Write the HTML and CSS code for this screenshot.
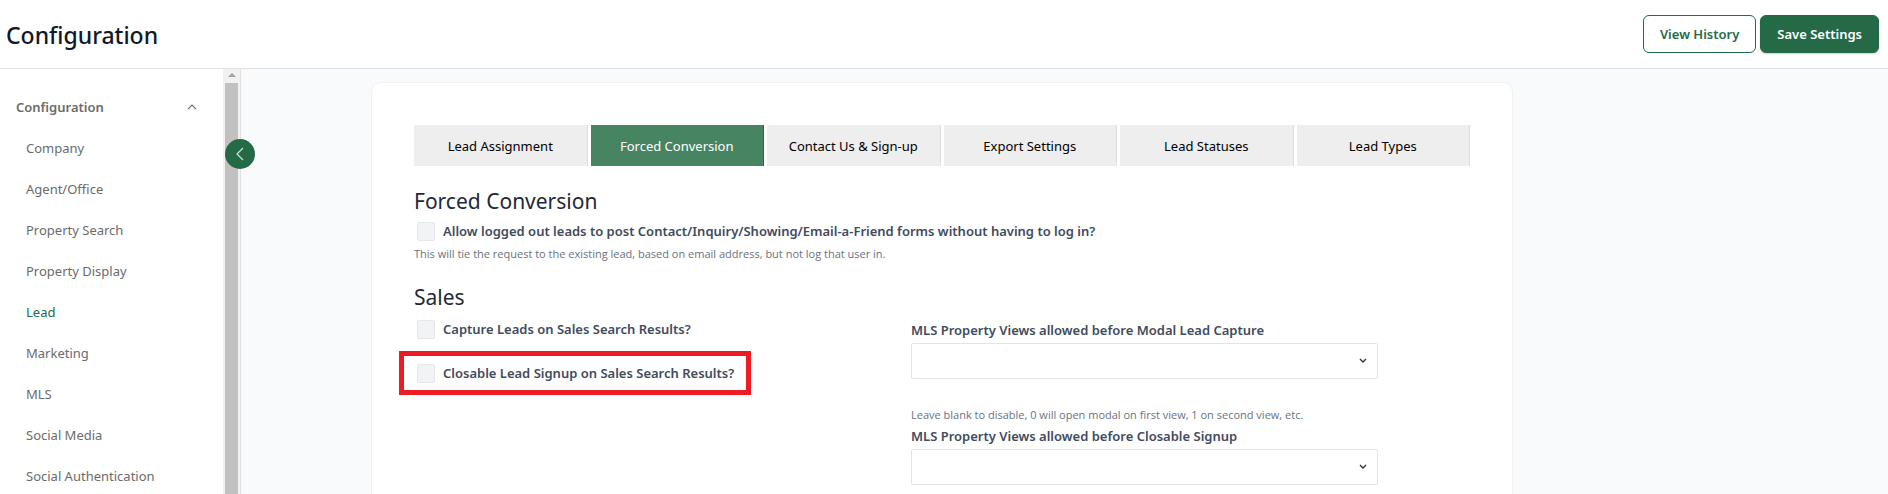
FILE: index.html
```html
<!DOCTYPE html>
<html lang="en">
<head>
  <meta charset="UTF-8" />
  <meta name="viewport" content="width=device-width, initial-scale=1" />
  <title>Configuration</title>
  <link rel="stylesheet" href="styles.css">
</head>
<body>

  <header class="topbar">
    <h1>Configuration</h1>
    <div class="actions">
      <button type="button" class="btn btn-outline">View History</button>
      <button type="button" class="btn btn-primary">Save Settings</button>
    </div>
  </header>

  <div class="layout">
    <aside class="sidebar">
      <nav class="menu">
        <button type="button" class="menu-title" aria-expanded="true">
          Configuration
          <svg width="10" height="6" viewBox="0 0 10 6" aria-hidden="true"><path d="M1 5.2 5 1.2l4 4" fill="none" stroke="currentColor" stroke-width="1.2"/></svg>
        </button>
        <a href="#">Company</a>
        <a href="#">Agent/Office</a>
        <a href="#">Property Search</a>
        <a href="#">Property Display</a>
        <a href="#" class="active">Lead</a>
        <a href="#">Marketing</a>
        <a href="#">MLS</a>
        <a href="#">Social Media</a>
        <a href="#">Social Authentication</a>
      </nav>

      <!-- Scroll track -->
      <div class="scroll-track">
        <svg class="scroll-arrow" width="8" height="4" viewBox="0 0 8 4" aria-hidden="true"><path d="M4 0 8 4H0z" fill="#a3a3a3"/></svg>
        <div class="scroll-thumb"></div>
      </div>

      <button type="button" class="collapse" aria-label="Collapse menu">
        <svg width="8" height="14" viewBox="0 0 8 14" aria-hidden="true"><path d="M7 1 1 7l6 6" fill="none" stroke="#d3e1da" stroke-width="1.2"/></svg>
      </button>
    </aside>

    <main class="content">
      <div class="card">
        <nav class="tabs">
          <a href="#">Lead Assignment</a>
          <a href="#" class="active">Forced Conversion</a>
          <a href="#">Contact Us &amp; Sign-up</a>
          <a href="#">Export Settings</a>
          <a href="#">Lead Statuses</a>
          <a href="#">Lead Types</a>
        </nav>

        <section>
          <h2>Forced Conversion</h2>
          <div class="check">
            <input type="checkbox" id="allowLoggedOut">
            <label for="allowLoggedOut">Allow logged out leads to post Contact/Inquiry/Showing/Email-a-Friend forms without having to log in?</label>
          </div>
          <p class="help">This will tie the request to the existing lead, based on email address, but not log that user in.</p>
        </section>

        <section>
          <h2>Sales</h2>
          <div class="columns">
            <div>
              <div class="check">
                <input type="checkbox" id="captureLeads">
                <label for="captureLeads">Capture Leads on Sales Search Results?</label>
              </div>
              <div class="check highlight">
                <input type="checkbox" id="closableSignup">
                <label for="closableSignup">Closable Lead Signup on Sales Search Results?</label>
              </div>
            </div>

            <div class="fields">
              <label for="modalViews">MLS Property Views allowed before Modal Lead Capture</label>
              <div class="select">
                <select id="modalViews"><option></option></select>
                <svg width="8" height="6" viewBox="0 0 8 6" aria-hidden="true"><path d="m1 1 3 3 3-3" fill="none" stroke="#333" stroke-width="1.4"/></svg>
              </div>
              <p class="help">Leave blank to disable, 0 will open modal on first view, 1 on second view, etc.</p>
              <label for="closableViews">MLS Property Views allowed before Closable Signup</label>
              <div class="select">
                <select id="closableViews"><option></option></select>
                <svg width="8" height="6" viewBox="0 0 8 6" aria-hidden="true"><path d="m1 1 3 3 3-3" fill="none" stroke="#333" stroke-width="1.4"/></svg>
              </div>
            </div>
          </div>
        </section>
      </div>
    </main>
  </div>

</body>
</html>
```
FILE: styles.css
```css
* {
  box-sizing: border-box;
}

body {
  margin: 0;
  height: 100vh;
  display: flex;
  flex-direction: column;
  overflow: hidden;
  font-family: "Segoe UI", "Noto Sans", "Open Sans", sans-serif;
  font-size: 13px;
  line-height: 20px;
  color: #374151;
  background-color: #f9fafc;
}

a {
  text-decoration: none;
}

button {
  font-family: inherit;
  font-size: 13px;
  cursor: pointer;
}

/* Top bar */
.topbar {
  flex: none;
  display: flex;
  align-items: center;
  justify-content: space-between;
  height: 69px;
  padding: 0 9px 0 6px;
  background-color: #fff;
  border-bottom: 1px solid #e2e2e2;
}

.topbar h1 {
  margin: 0;
  padding-top: 2px;
  font-size: 23px;
  line-height: 32px;
  font-weight: 500;
  color: #111827;
}

.actions {
  display: flex;
  gap: 4px;
}

.btn {
  height: 38px;
  padding: 0 16px;
  border: 1px solid #246a47;
  border-radius: 6px;
  font-weight: 600;
}

.btn-outline {
  background-color: #fff;
  color: #246a47;
}

.btn-primary {
  background-color: #246a47;
  color: #fff;
  box-shadow: 0 1px 2px rgba(0,0,0,0.2);
}

/* Sidebar */
.layout {
  flex: 1;
  min-height: 0;
  display: flex;
}

.sidebar {
  position: relative;
  flex: none;
  display: flex;
  width: 241px;
  background-color: #fff;
  border-right: 1px solid #e2e2e2;
}

.menu {
  flex: 1;
  overflow: hidden;
  padding: 17px 26px 0 16px;
}

.menu a,
.menu-title {
  display: flex;
  align-items: center;
  height: 41px;
  color: #6b6b6b;
}

.menu a {
  padding-left: 10px;
  white-space: nowrap;
}

.menu a.active {
  color: #246a47;
}

.menu-title {
  justify-content: space-between;
  width: 100%;
  padding: 0;
  border: none;
  background: none;
  font-weight: 600;
}

.scroll-track {
  display: flex;
  flex-direction: column;
  align-items: center;
  width: 17px;
  padding-top: 4px;
  background-color: #f1f1f1;
}

.scroll-arrow {
  flex: none;
  margin-bottom: 6px;
}

.scroll-thumb {
  flex: 1;
  width: 13px;
  background-color: #c1c1c1;
}

.collapse {
  position: absolute;
  top: 70px;
  right: -15px;
  display: flex;
  align-items: center;
  justify-content: center;
  width: 30px;
  height: 30px;
  padding: 0;
  border: none;
  border-radius: 50%;
  background-color: #246a47;
}

/* Content */
.content {
  flex: 1;
  min-width: 0;
  display: flex;
  padding: 13px 20px 0 130px;
}

.card {
  flex: 1;
  max-width: 1142px;
  padding: 42px 42px 0;
  background-color: #fff;
  border: 1px solid #eff1f4;
  border-bottom: none;
  border-radius: 10px 10px 0 0;
}

.tabs {
  display: grid;
  grid-template-columns: repeat(6, 1fr);
  gap: 3px;
  margin-bottom: 20px;
}

.tabs a {
  padding: 11px 0 10px;
  border-right: 1px solid #dedede;
  background-color: #eee;
  color: #000;
  text-align: center;
}

.tabs a.active {
  background-color: #478562;
  border-color: #246a47;
  color: #fff;
}

h2 {
  margin: 0 0 5px;
  font-size: 21px;
  line-height: 30px;
  font-weight: 400;
  color: #1f2937;
}

label {
  font-weight: 600;
  color: #414b5c;
}

.check {
  display: flex;
  align-items: center;
  gap: 8px;
  padding-left: 3px;
}

.check input {
  appearance: none;
  width: 18px;
  height: 19px;
  margin: 0;
  border: 1px solid #e5e7e9;
  border-radius: 2px;
  background-color: #f2f3f5;
}

.help {
  margin: 5px 0 20px;
  font-family: "Segoe UI", "Open Sans", "Noto Sans", sans-serif;
  font-size: 11px;
  line-height: 16px;
  color: #6b7280;
}

.columns {
  display: grid;
  grid-template-columns: 497px minmax(0, 467px);
  padding-top: 2px;
}

.highlight {
  width: max-content;
  height: 44px;
  margin: 12px 0 0 -15px;
  padding: 0 12px 0 13px;
  border: 5px solid #ed1c24;
}

.fields label {
  display: block;
  line-height: 22px;
}

.select {
  position: relative;
  margin-top: 2px;
}

.select select {
  appearance: none;
  display: block;
  width: 100%;
  height: 36px;
  border: 1px solid #e4e4e4;
  border-radius: 2px;
  background-color: #fff;
}

.select svg {
  position: absolute;
  top: 15px;
  right: 11px;
  pointer-events: none;
}

.fields .help {
  margin: 28px 0 2px;
}
```
